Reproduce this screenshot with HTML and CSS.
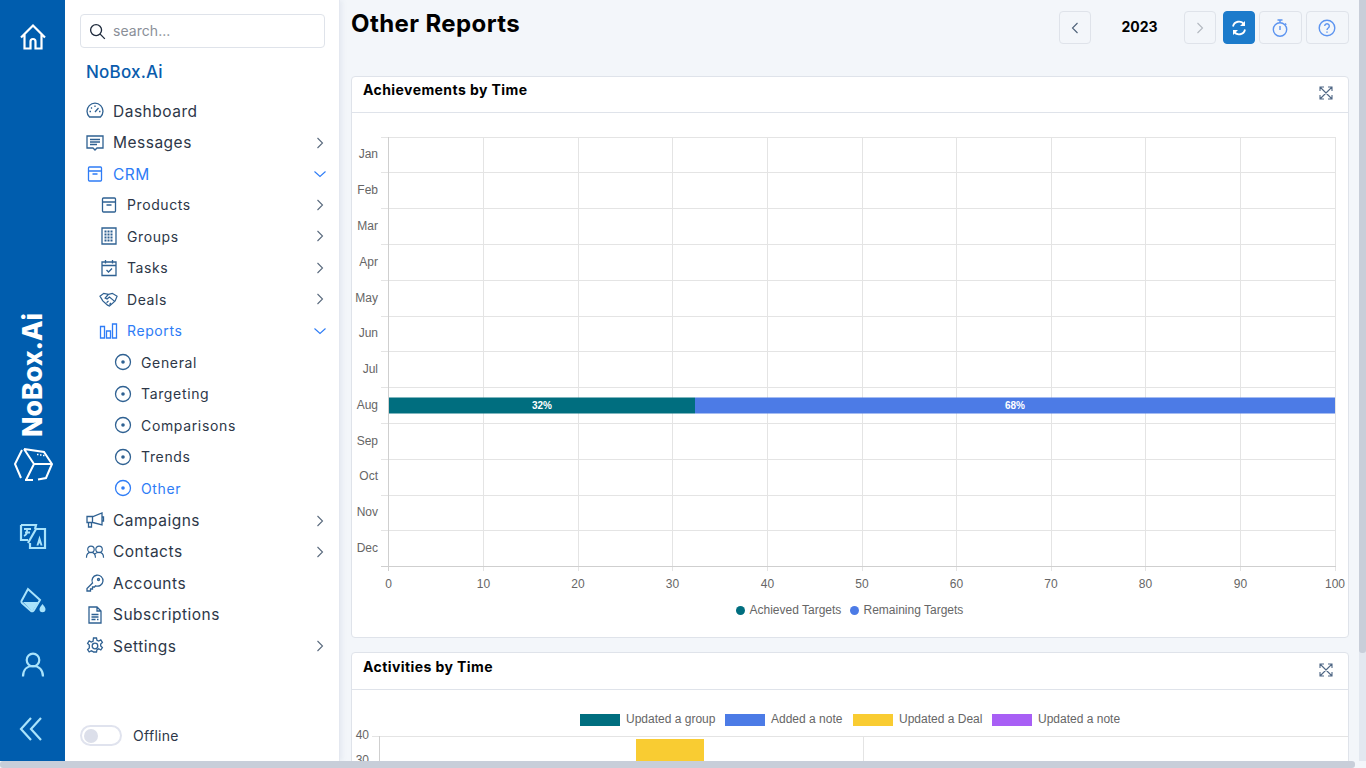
FILE: index.html
```html
<!DOCTYPE html>
<html lang="en">
<head>
    <meta charset="UTF-8">
    <meta name="viewport" content="width=device-width, initial-scale=1.0">
    <title>Other Reports</title>
    <link rel="stylesheet" href="styles.css">
</head>
<body>
<div class="page">
    <div class="app">
        <aside class="rail">
            <svg class="rail-icon home-icon" viewBox="0 0 28 28"><path d="M2 14.500 14 2.500l12 12M5.500 11.500v14h6v-7a2.500 2.500 0 0 1 5 0v7h6v-14"/></svg>
            <div class="rail-brand">
                <span class="rail-name">NoBox.Ai</span>
                <svg class="rail-cube" viewBox="0 0 40 36"><path d="M9 3 2 17l6 14M11 2l20 3 8 12-6 14-8 1.500M20 33h-8M11 2l10 15h18M21 17l-8 16"/><path d="M24 7.500h1.500M27 8h1.500M30 8.500h1.500" stroke-width="1.500"/></svg>
            </div>
            <svg class="rail-icon translate-icon" viewBox="0 0 28 28"><path d="M2 2h15l-1 4M2 2v15h7"/><path d="M9 20 17 6h9v19H11v-5"/><path class="thin" d="M5 6h7M8 6v3c0 2-1 3-3 4M6 9.500h5"/><path class="icon-fill" d="M17.500 22.500l3-10 3 10h-2l-.5-2h-1l-.5 2Z"/></svg>
            <svg class="rail-icon bucket-icon" viewBox="0 0 28 28"><path d="M9 2 2.500 14Q2 15 3 16l9 8q2 1 3-1l6-10Z"/><path class="icon-fill" d="M4 15h15.500L14 23q-.5 1-1.500.500Z"/><path class="icon-fill" d="M23.500 17c2 2.600 3 3.800 3 5.200a3 3 0 0 1-6 0c0-1.400 1-2.600 3-5.200Z"/></svg>
            <svg class="rail-icon" viewBox="0 0 28 28"><circle cx="14" cy="9" r="6.300"/><path d="M4 25.500c0-6.500 4-10.500 10-10.500s10 4 10 10.500"/></svg>
            <svg class="rail-icon" viewBox="0 0 28 28"><path d="M12 3 2 14l10 11M22 3 12 14l10 11"/></svg>
        </aside>

        <nav class="sidebar">
            <div class="search">
                <svg class="search-icon" viewBox="0 0 18 18"><circle cx="7.500" cy="7.500" r="5.800"/><path d="m11.800 11.800 5 5"/></svg>
                <span>search...</span>
            </div>
            <div class="org-name">NoBox.Ai</div>
            <ul class="nav">
                <li class="nav-item">
                    <svg class="nav-icon" viewBox="0 0 18 18"><path d="M3.500 15A8 8 0 1 1 14.500 15Z"/><path d="M3.500 9.500h1.500M9 3.500V5M13 9.500h1.500M5 5.500l1 1M9 10l3.500-4"/></svg>
                    <span>Dashboard</span>
                </li>
                <li class="nav-item">
                    <svg class="nav-icon" viewBox="0 0 18 18"><path d="M1 2h16v12h-6l-2 2-2-2H1Z"/><path d="M4 5.500h10M4 8h10M4 10.500h7"/></svg>
                    <span>Messages</span>
                    <svg class="chevron" viewBox="0 0 12 12"><path d="m3.500 1 5 5-5 5"/></svg>
                </li>
                <li class="nav-item active">
                    <svg class="nav-icon" viewBox="0 0 18 18"><rect x="2.500" y="2" width="13" height="14" rx="1"/><path d="M2.500 6h13M6.500 9h5"/></svg>
                    <span>CRM</span>
                    <svg class="chevron" viewBox="0 0 12 12"><path d="m.5 3.500 5.500 5 5.500-5"/></svg>
                </li>
                <li class="nav-item sub">
                    <svg class="nav-icon" viewBox="0 0 18 18"><rect x="2.500" y="2" width="13" height="14" rx="1"/><path d="M2.500 6h13M6.500 9h5"/></svg>
                    <span>Products</span>
                    <svg class="chevron" viewBox="0 0 12 12"><path d="m3.500 1 5 5-5 5"/></svg>
                </li>
                <li class="nav-item sub">
                    <svg class="nav-icon" viewBox="0 0 18 18"><path d="M2 1h14v16H2z"/><path class="icon-dots" d="M4.500 4.500h9M4.500 7.500h9M4.500 10.500h9M4.500 13.500h9"/></svg>
                    <span>Groups</span>
                    <svg class="chevron" viewBox="0 0 12 12"><path d="m3.500 1 5 5-5 5"/></svg>
                </li>
                <li class="nav-item sub">
                    <svg class="nav-icon" viewBox="0 0 18 18"><path d="M2 3h14v13.500H2zM2 6.500h14M5.500 1v3.500M12.500 1v3.500M6.500 11l2 2 3.500-3.500"/></svg>
                    <span>Tasks</span>
                    <svg class="chevron" viewBox="0 0 12 12"><path d="m3.500 1 5 5-5 5"/></svg>
                </li>
                <li class="nav-item sub">
                    <svg class="nav-icon wide" viewBox="0 0 20 18"><path d="M1 6 5 3l5 1 4-1 5 3-2 5-6 5.500-2-1-5-4.500ZM10 4 6.500 8l2 1 2.500-2 5.500 4.500M8 13l2-2M11 15l1.500-2"/></svg>
                    <span>Deals</span>
                    <svg class="chevron" viewBox="0 0 12 12"><path d="m3.500 1 5 5-5 5"/></svg>
                </li>
                <li class="nav-item sub active">
                    <svg class="nav-icon wide" viewBox="0 0 18 18"><path d="M1 4.500h4V16H1zM7 9h4v7H7zM13 2h4v14h-4z"/></svg>
                    <span>Reports</span>
                    <svg class="chevron" viewBox="0 0 12 12"><path d="m.5 3.500 5.500 5 5.500-5"/></svg>
                </li>
                <li class="nav-item leaf">
                    <svg class="nav-icon" viewBox="0 0 18 18"><circle cx="9" cy="9" r="7.500"/><circle class="icon-fill" cx="9" cy="9" r="1.800"/></svg>
                    <span>General</span>
                </li>
                <li class="nav-item leaf">
                    <svg class="nav-icon" viewBox="0 0 18 18"><circle cx="9" cy="9" r="7.500"/><circle class="icon-fill" cx="9" cy="9" r="1.800"/></svg>
                    <span>Targeting</span>
                </li>
                <li class="nav-item leaf">
                    <svg class="nav-icon" viewBox="0 0 18 18"><circle cx="9" cy="9" r="7.500"/><circle class="icon-fill" cx="9" cy="9" r="1.800"/></svg>
                    <span>Comparisons</span>
                </li>
                <li class="nav-item leaf">
                    <svg class="nav-icon" viewBox="0 0 18 18"><circle cx="9" cy="9" r="7.500"/><circle class="icon-fill" cx="9" cy="9" r="1.800"/></svg>
                    <span>Trends</span>
                </li>
                <li class="nav-item leaf active">
                    <svg class="nav-icon" viewBox="0 0 18 18"><circle cx="9" cy="9" r="7.500"/><circle class="icon-fill" cx="9" cy="9" r="1.800"/></svg>
                    <span>Other</span>
                </li>
                <li class="nav-item">
                    <svg class="nav-icon" viewBox="0 0 18 18"><path d="M1 4.500h6L16 1v12L7 10.500H1ZM2.500 10.500V15h3v-4.500M16 5h1.500v4H16M6.500 4.500v6"/></svg>
                    <span>Campaigns</span>
                    <svg class="chevron" viewBox="0 0 12 12"><path d="m3.500 1 5 5-5 5"/></svg>
                </li>
                <li class="nav-item">
                    <svg class="nav-icon" viewBox="0 0 20 18"><circle cx="5.500" cy="6" r="3.600"/><circle cx="14.500" cy="6" r="3.600"/><path d="M.5 15.500c0-3.500 2-6 5-6s5 2.500 5 6M10 11c1-1 2.500-1.500 4.500-1.500 3 0 5 2.500 5 6"/></svg>
                    <span>Contacts</span>
                    <svg class="chevron" viewBox="0 0 12 12"><path d="m3.500 1 5 5-5 5"/></svg>
                </li>
                <li class="nav-item">
                    <svg class="nav-icon" viewBox="0 0 18 18"><path d="M6.500 9 1 14.500V17h3.500v-2H6.500v-2h2l1-1.200A5.500 5.500 0 1 0 6.500 9Z"/><circle cx="12.500" cy="5.500" r="1"/></svg>
                    <span>Accounts</span>
                </li>
                <li class="nav-item">
                    <svg class="nav-icon" viewBox="0 0 18 18"><path d="M3 1h8l4 4v12H3ZM11 1v4h4M5.500 8.500h7M5.500 11h7M5.500 13.500h4M11 13.500h1.500"/></svg>
                    <span>Subscriptions</span>
                </li>
                <li class="nav-item">
                    <svg class="nav-icon" viewBox="0 0 18 18"><circle cx="9" cy="9" r="2.800"/><path d="M7.500 1h3l.5 2.300 1.700.8 2.100-1.200 1.600 2.500-1.700 1.600v1.900l1.700 1.600-1.600 2.500-2.100-1.200-1.700.8-.5 2.400h-3L7 14.600l-1.700-.8-2.100 1.200-1.600-2.500 1.700-1.600V8L1.600 6.400l1.600-2.500 2.100 1.200L7 4.300Z"/></svg>
                    <span>Settings</span>
                    <svg class="chevron" viewBox="0 0 12 12"><path d="m3.500 1 5 5-5 5"/></svg>
                </li>
            </ul>
            <div class="offline">
                <span class="toggle"><span class="toggle-knob"></span></span>
                <span>Offline</span>
            </div>
        </nav>

        <main class="main">
            <header class="topbar">
                <h1>Other Reports</h1>
                <div class="toolbar">
                    <button class="btn btn-small">
                        <svg class="btn-chevron" viewBox="0 0 12 12"><path d="M8.500 1l-5 5 5 5"/></svg>
                    </button>
                    <span class="year">2023</span>
                    <button class="btn btn-small btn-off">
                        <svg class="btn-chevron" viewBox="0 0 12 12"><path d="m3.500 1 5 5-5 5"/></svg>
                    </button>
                    <button class="btn btn-small btn-primary">
                        <svg class="btn-icon" viewBox="0 0 16 16"><path d="M2 6.500A6 6 0 0 1 13 4.500M14 9.500A6 6 0 0 1 3 11.500"/><path class="icon-fill" d="M14 1v5h-5ZM2 15v-5h5Z"/></svg>
                    </button>
                    <button class="btn btn-wide">
                        <svg class="btn-round" viewBox="0 0 18 18"><circle cx="9" cy="10.500" r="6.700"/><path d="M6.500 1h5M9 1v2.500M14 4.500l1.300 1.200M9 7v4"/></svg>
                    </button>
                    <button class="btn btn-wide">
                        <svg class="btn-round" viewBox="0 0 18 18"><circle cx="9" cy="9" r="7.800"/><path d="M6.700 7a2.300 2.300 0 1 1 3.500 2C9.300 9.600 9 10 9 11M9 12.500v1.200"/></svg>
                    </button>
                </div>
            </header>

            <section class="card card-first">
                <div class="card-header">
                    <h2>Achievements by Time</h2>
                    <svg class="expand" viewBox="0 0 14 14"><path d="M1 1l12 12M13 1 1 13M1 5V1h4M9 1h4v4M13 9v4H9M5 13H1V9"/></svg>
                </div>
                <svg class="chart-one" viewBox="352 113 996 524">
                    <path class="grid" d="M483.500 137v434M578.500 137v434M672.500 137v434M767.500 137v434M862.500 137v434M956.500 137v434M1051.500 137v434M1145.500 137v434M1240.500 137v434M1335.500 137v434"/>
                    <path class="grid" d="M381 137.500h955M381 172.500h955M381 208.500h955M381 244.500h955M381 280.500h955M381 316.500h955M381 351.500h955M381 387.500h955M381 423.500h955M381 459.500h955M381 495.500h955M381 530.500h955"/>
                    <path class="axis" d="M388.500 137v434M381 566.500h955"/>
                    <rect x="389" y="397.500" width="306" height="16" fill="#006e7f"/>
                    <rect x="695" y="397.500" width="640" height="16" fill="#4c7be6"/>
                    <text class="bar-label" x="542" y="409">32%</text>
                    <text class="bar-label" x="1015" y="409">68%</text>
                    <text class="tick end" x="378" y="158">Jan</text>
                    <text class="tick end" x="378" y="194">Feb</text>
                    <text class="tick end" x="378" y="230">Mar</text>
                    <text class="tick end" x="378" y="266">Apr</text>
                    <text class="tick end" x="378" y="302">May</text>
                    <text class="tick end" x="378" y="337">Jun</text>
                    <text class="tick end" x="378" y="373">Jul</text>
                    <text class="tick end" x="378" y="409">Aug</text>
                    <text class="tick end" x="378" y="445">Sep</text>
                    <text class="tick end" x="378" y="480">Oct</text>
                    <text class="tick end" x="378" y="516">Nov</text>
                    <text class="tick end" x="378" y="552">Dec</text>
                    <text class="tick mid" x="388.500" y="588">0</text>
                    <text class="tick mid" x="483.500" y="588">10</text>
                    <text class="tick mid" x="578" y="588">20</text>
                    <text class="tick mid" x="672.500" y="588">30</text>
                    <text class="tick mid" x="767.500" y="588">40</text>
                    <text class="tick mid" x="862" y="588">50</text>
                    <text class="tick mid" x="956.500" y="588">60</text>
                    <text class="tick mid" x="1051" y="588">70</text>
                    <text class="tick mid" x="1145.500" y="588">80</text>
                    <text class="tick mid" x="1240.500" y="588">90</text>
                    <text class="tick mid" x="1335" y="588">100</text>
                    <circle cx="740.500" cy="610.500" r="4.500" fill="#006e7f"/>
                    <text class="tick" x="749.500" y="614">Achieved Targets</text>
                    <circle cx="854.500" cy="610.500" r="4.500" fill="#4c7be6"/>
                    <text class="tick" x="863.500" y="614">Remaining Targets</text>
                </svg>
            </section>

            <section class="card card-last">
                <div class="card-header">
                    <h2>Activities by Time</h2>
                    <svg class="expand" viewBox="0 0 14 14"><path d="M1 1l12 12M13 1 1 13M1 5V1h4M9 1h4v4M13 9v4H9M5 13H1V9"/></svg>
                </div>
                <svg class="chart-two" viewBox="352 690 996 80">
                    <rect x="580" y="714" width="40" height="12" fill="#006e7f"/>
                    <text class="tick" x="626" y="723">Updated a group</text>
                    <rect x="725" y="714" width="40" height="12" fill="#4c7be6"/>
                    <text class="tick" x="771" y="723">Added a note</text>
                    <rect x="853" y="714" width="40" height="12" fill="#f9cc32"/>
                    <text class="tick" x="899" y="723">Updated a Deal</text>
                    <rect x="992" y="714" width="40" height="12" fill="#a85ff5"/>
                    <text class="tick" x="1038" y="723">Updated a note</text>
                    <path class="grid" d="M372 736.500h976M863.500 736v40"/>
                    <path class="axis" d="M379.500 736v40"/>
                    <rect x="636" y="739" width="68" height="30" fill="#f9cc32"/>
                    <text class="tick end" x="369" y="739">40</text>
                    <text class="tick end" x="369" y="764">30</text>
                </svg>
            </section>
        </main>

        <div class="vbar"><div class="vbar-thumb"></div></div>
    </div>
    <div class="hbar"><div class="hbar-thumb"></div></div>
</div>
</body>
</html>
```

FILE: styles.css
```css
* {
    box-sizing: border-box;
}

html, body {
    margin: 0;
    height: 100%;
    overflow: hidden;
}

body {
    font-family: Inter, "Liberation Sans", sans-serif;
    color: #2d3748;
}

svg {
    display: block;
    flex: none;
    overflow: visible;
}

.page {
    display: flex;
    flex-direction: column;
    height: 768px;
    background: #f3f6fa;
}

.app {
    display: flex;
    height: 761px;
    flex: none;
    overflow: hidden;
}

/* left blue rail */
.rail {
    width: 65px;
    flex: none;
    background: #005dae;
    display: flex;
    flex-direction: column;
    align-items: center;
    padding-top: 23px;
}

.rail-icon {
    width: 28px;
    height: 28px;
    margin-bottom: 36px;
    fill: none;
    stroke: #a9e3fb;
    stroke-width: 2.2;
}

.rail-icon .icon-fill {
    fill: #a9e3fb;
    stroke: none;
}

.rail-icon .thin {
    stroke-width: 1.8;
}

.translate-icon {
    margin-left: 1px;
}

.bucket-icon {
    stroke-width: 2;
}

.home-icon {
    margin-bottom: 0;
    stroke: #fff;
}

.rail-brand {
    margin-top: 262px;
    margin-bottom: 40px;
    display: flex;
    flex-direction: column;
    align-items: center;
}

.rail-name {
    writing-mode: vertical-rl;
    transform: rotate(180deg);
    margin-right: 2px;
    font-size: 26.7px;
    line-height: 30px;
    font-weight: 800;
    color: #fff;
    height: 124px;
    text-align: left;
}

.rail-cube {
    width: 40px;
    height: 36px;
    margin-top: 10px;
    fill: none;
    stroke: #fff;
    stroke-width: 2;
}

/* sidebar */
.sidebar {
    width: 275px;
    flex: none;
    background: #fff;
    border-right: 1px solid #e4e8f0;
    box-shadow: 2px 0 5px rgba(120, 140, 170, 0.12);
    display: flex;
    flex-direction: column;
    padding-top: 14px;
}

.search {
    margin-left: 15px;
    width: 245px;
    height: 34px;
    border: 1px solid #dfe3ea;
    border-radius: 4px;
    display: flex;
    align-items: center;
    gap: 7px;
    padding: 0 0 2px 8px;
    font-size: 14px;
    letter-spacing: 0.05px;
    color: #8a8f98;
}

.search-icon {
    width: 17px;
    height: 17px;
    margin-top: 2px;
    fill: none;
    stroke: #1e2a3c;
    stroke-width: 1.4;
}

.org-name {
    margin: 13px 0 0 21px;
    font-size: 17px;
    line-height: 22px;
    font-weight: 500;
    letter-spacing: 0.2px;
    color: #0a5cad;
}

.nav {
    list-style: none;
    margin: 12.7px 0 0;
    padding: 0;
}

.nav-item {
    display: flex;
    align-items: center;
    height: 31.47px;
    padding: 0 13px 0 21px;
    font-size: 15.5px;
    letter-spacing: 0.5px;
    color: #2d3748;
}

.nav-item.sub {
    padding: 0 13px 2px 35px;
    font-size: 14px;
    letter-spacing: 0.6px;
}

.nav-item.leaf {
    padding: 0 13px 2px 49px;
    font-size: 14px;
    letter-spacing: 0.65px;
}

.nav-item.active {
    color: #2e7cf6;
}

.nav-icon {
    width: 18px;
    height: 18px;
    margin-right: 9px;
    fill: none;
    stroke: #2f6192;
    stroke-width: 1.3;
}

.nav-icon.wide {
    width: 19px;
    margin-left: -1px;
}

.nav-icon .icon-fill {
    fill: #2f6192;
    stroke: none;
}

.nav-icon .icon-dots {
    stroke-width: 2;
    stroke-dasharray: 2 1;
}

.active .nav-icon {
    stroke: #2e7cf6;
}

.active .nav-icon .icon-fill {
    fill: #2e7cf6;
}

.chevron {
    width: 12px;
    height: 12px;
    margin-left: auto;
    fill: none;
    stroke: #5a6a7e;
    stroke-width: 1.1;
}

.active .chevron {
    stroke: #2e7cf6;
}

.offline {
    margin: auto 0 15px 15px;
    display: flex;
    align-items: center;
    gap: 11px;
    font-size: 14px;
    letter-spacing: 0.3px;
    color: #2d3748;
}

.toggle {
    width: 42px;
    height: 21px;
    border: 2px solid #e0e3ee;
    border-radius: 11px;
    padding: 1.5px 2px;
}

.toggle-knob {
    display: block;
    width: 14px;
    height: 14px;
    border-radius: 50%;
    background: #dcdfea;
}

/* main area */
.main {
    flex: 1;
    min-width: 0;
    padding: 0 10px 0 11px;
    overflow: hidden;
}

.topbar {
    height: 76px;
    display: flex;
    justify-content: space-between;
    align-items: flex-start;
}

h1 {
    margin: 8px 0 0;
    font-size: 24px;
    line-height: 32px;
    font-weight: 700;
    letter-spacing: 0.4px;
    color: #000;
}

.toolbar {
    display: flex;
    align-items: center;
    gap: 4px;
    margin-top: 11px;
}

.btn {
    height: 33px;
    padding: 0;
    background: transparent;
    border: 1px solid #dfe3ea;
    border-radius: 4px;
    display: flex;
    align-items: center;
    justify-content: center;
}

.btn-small {
    width: 32px;
}

.btn-wide {
    width: 43px;
    padding-right: 2px;
}

.btn-off .btn-chevron {
    stroke: #b3b8c0;
}

.btn-primary {
    background: #1c7bcb;
    border-color: #1c7bcb;
    margin-left: 3px;
}

.btn-chevron {
    width: 12px;
    height: 12px;
    fill: none;
    stroke: #4d6078;
    stroke-width: 1.1;
}

.btn-icon {
    width: 16px;
    height: 16px;
    fill: none;
    stroke: #fff;
    stroke-width: 1.8;
}

.btn-icon .icon-fill {
    fill: #fff;
    stroke: none;
}

.btn-round {
    width: 18px;
    height: 18px;
    fill: none;
    stroke: #5c94f0;
    stroke-width: 1.4;
}

.year {
    width: 85px;
    margin-top: -3px;
    padding-left: 4px;
    text-align: center;
    font-size: 14px;
    font-weight: 700;
    color: #000;
}

.card {
    background: #fff;
    border: 1px solid #dfe3ea;
    border-radius: 4px;
}

.card-first {
    margin-bottom: 14px;
}

.card-header {
    height: 36px;
    border-bottom: 1px solid #dfe3ea;
    padding: 4px 15px 0 11px;
    display: flex;
    justify-content: space-between;
}

.card-last .card-header {
    height: 37px;
    padding-top: 5px;
}

h2 {
    margin: 0;
    font-size: 14px;
    line-height: 18px;
    font-weight: 700;
    letter-spacing: 0.42px;
    color: #000;
}

.expand {
    width: 14px;
    height: 14px;
    margin-top: 5px;
    fill: none;
    stroke: #4f6785;
    stroke-width: 1.1;
}

.chart-one {
    width: 996px;
    height: 524px;
}

.chart-two {
    width: 996px;
    height: 80px;
}

/* chart parts */
.grid {
    fill: none;
    stroke: #e4e4e4;
    stroke-width: 1;
}

.axis {
    fill: none;
    stroke: #cfcfcf;
    stroke-width: 1;
}

.tick {
    font-family: "Liberation Sans", Arial, sans-serif;
    font-size: 12px;
    fill: #666;
}

.tick.end {
    text-anchor: end;
}

.tick.mid {
    text-anchor: middle;
}

.bar-label {
    font-family: "Liberation Sans", Arial, sans-serif;
    font-size: 10px;
    font-weight: 700;
    fill: #fff;
    text-anchor: middle;
}

/* scrollbars */
.vbar {
    width: 7px;
    flex: none;
    background: #e3e8f0;
}

.vbar-thumb {
    height: 653px;
    background: #c8ced9;
    border-radius: 0 0 3px 3px;
}

.hbar {
    height: 7px;
    flex: none;
    background: #f3f6fa;
}

.hbar-thumb {
    width: 1355px;
    height: 7px;
    background: #c8ced9;
    border-radius: 3px;
}
```
